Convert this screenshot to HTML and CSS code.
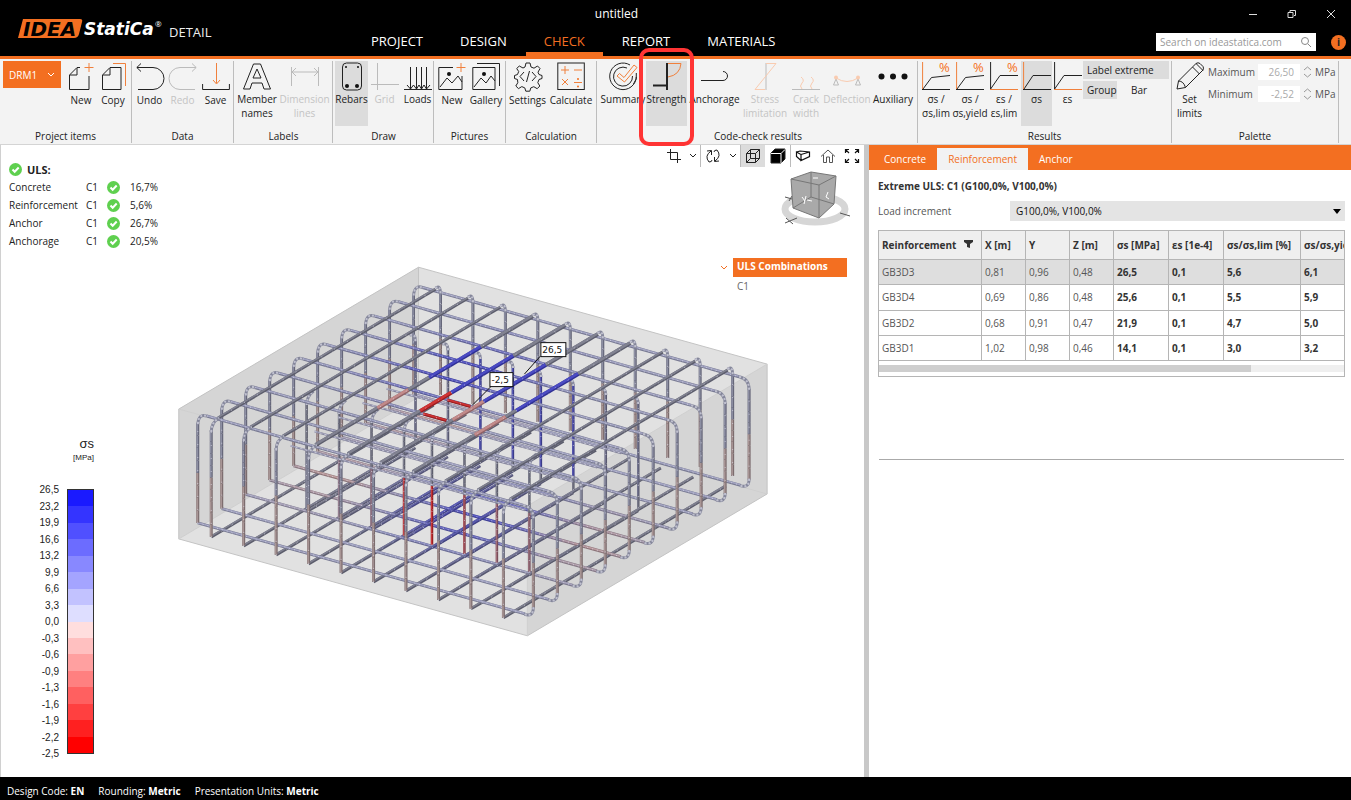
FILE: index.html
```html
<!DOCTYPE html>
<html lang="en">
<head>
<meta charset="utf-8">
<title>IDEA StatiCa Detail - untitled</title>
<link rel="stylesheet" href="styles.css">
</head>
<body>
<div class="app">
<header class="titlebar">
  <div class="brand">
    <svg class="logo" width="146" height="22" viewBox="0 0 146 22" role="img" aria-label="IDEA StatiCa">
      <path class="logo-plate" d="M6 1H63Q66 1 65 4L62 16Q61 20 57 20H1Z"/>
      <text class="logo-idea" x="6" y="18">IDEA</text>
      <text class="logo-statica" x="67" y="17">StatiCa</text>
      <text class="logo-reg" x="138" y="9">®</text>
    </svg>
    <span>DETAIL</span>
  </div>
  <div class="doc-title">untitled</div>
  <div class="window-buttons">
    <button aria-label="Minimize"><svg width="12" height="12"><path d="M2 6.500h8"/></svg></button>
    <button aria-label="Restore"><svg width="12" height="12"><path d="M2 4.500h5v5H2zM4 4V2.500h5.500v5H8"/></svg></button>
    <button aria-label="Close"><svg width="12" height="12"><path d="M2 2l8 8M10 2l-8 8"/></svg></button>
  </div>
  <nav class="tabs">
    <a href="#project">PROJECT</a><a href="#design">DESIGN</a><a href="#check" class="active">CHECK</a><a href="#report">REPORT</a><a href="#materials">MATERIALS</a>
  </nav>
  <div class="header-tools">
    <label class="search"><input type="text" placeholder="Search on ideastatica.com" aria-label="Search on ideastatica.com"><svg width="12" height="12"><circle cx="5" cy="5" r="3.500"/><path d="M8 8l3 3"/></svg></label>
    <button class="info" aria-label="Info">i</button>
  </div>
</header>

<div class="ribbon">
  <section class="group g-project">
    <div class="tools">
      <button class="item-select">DRM1 <svg width="8" height="6"><path d="M1 1l3 3 3-3"/></svg></button>
      <button class="tool low"><svg class="ico" viewBox="0 0 28 28"><path d="M22 14V27.500H2.500V13L10 5.500H13M10 6V13H3"/><path class="o" d="M22 1v9M17.500 5.500h9"/></svg>New</button>
      <button class="tool low"><svg class="ico" viewBox="0 0 28 28"><path d="M3.500 13L11 5.500H22V27.500H3.500zM11 6V13H4"/><path class="o" d="M14 1.500H26.500V24"/></svg>Copy</button>
    </div>
    <h2>Project items</h2>
  </section>
  <section class="group g-data">
    <div class="tools">
      <button class="tool low"><svg class="ico" viewBox="0 0 28 28"><path d="M5 1.500L.800 5.500 5 9.500M1 5.500H17A11 11 0 0 1 17 27.500H2"/></svg>Undo</button>
      <button class="tool low" disabled><svg class="ico" viewBox="0 0 28 28"><path d="M23 1.500L27.200 5.500 23 9.500M27 5.500H11A11 11 0 0 0 11 27.500H26"/></svg>Redo</button>
      <button class="tool low"><svg class="ico" viewBox="0 0 28 28"><path d="M.600 22V27.500H27.400V22"/><path class="o" d="M14.500 1V21M11 18l3.500 4 3.500-4"/></svg>Save</button>
    </div>
    <h2>Data</h2>
  </section>
  <section class="group g-labels">
    <div class="tools">
      <button class="tool"><svg class="ico" viewBox="0 0 28 28"><path d="M10.500 2H17.500L27.500 27H21L19 21H9L7 27H.500zM14 7L18 16H10z"/></svg>Member<br>names</button>
      <button class="tool" disabled><svg class="ico" viewBox="0 0 28 28"><path d="M.500 5V24M27.500 5V24M1 10H27M5 6L1 10l4 4M23 6l4 4-4 4"/></svg>Dimension<br>lines</button>
    </div>
    <h2>Labels</h2>
  </section>
  <section class="group g-draw">
    <div class="tools">
      <button class="tool on"><svg class="ico" viewBox="0 0 28 28"><rect x="4.500" y="1" width="19" height="27" rx="4"/><g class="fill"><circle cx="8" cy="5" r="1"/><circle cx="20" cy="5" r="1"/><circle cx="9" cy="24" r="2"/><circle cx="19" cy="24" r="2"/></g></svg>Rebars</button>
      <button class="tool" disabled><svg class="ico" viewBox="0 0 28 28"><path d="M6.500 1V28M0 22.500H28"/></svg>Grid</button>
      <button class="tool"><svg class="ico" viewBox="0 0 28 28"><path d="M0 27.500H28M6.500 5V27M12.500 5V27M17.500 5V27M22.500 5V27M3 23l3.500 4 3-4 3 4 2.500-4 2.500 4 2.500-4 2.500 4 3.500-4"/></svg>Loads</button>
    </div>
    <h2>Draw</h2>
  </section>
  <section class="group g-pictures">
    <div class="tools">
      <button class="tool low"><svg class="ico" viewBox="0 0 28 28"><path d="M15 5.500H.800V27.500H24V14M2 25l7-9 5 5 6-7 4 6"/><circle class="fill" cx="11" cy="12" r="2"/><path class="o" d="M23 1v9M18.500 5.500h9"/></svg>New</button>
      <button class="tool low"><svg class="ico" viewBox="0 0 28 28"><path d="M.800 5.500H23V27.500H.800zM5 1.500H27.500V24M2 25l7-9 5 5 5-7 4 5"/><circle class="fill" cx="12" cy="12" r="2"/></svg>Gallery</button>
    </div>
    <h2>Pictures</h2>
  </section>
  <section class="group g-calc">
    <div class="tools">
      <button class="tool low"><svg class="ico" viewBox="0 0 28 28"><path d="M12 1h4l1 4 3 1.200 3.500-2.200 2.500 2.500-2 3.700 1 2.300 3 1v3l-3 1-1.200 3.200 2 3.300-2.600 2.700-3.400-2-3 1.200-1 3.300h-4l-1-3.300-3-1.300-3.300 2-2.700-2.600 2-3.300L3.500 17.500.500 16.500v-3l3-1 1.200-3L2.700 6.500 5.300 4 9 6l2-1zM10 10l-4 4.500 4 4.500M18 10l4 4.500-4 4.500M15.500 9l-3 11"/></svg>Settings</button>
      <button class="tool low"><svg class="ico" viewBox="0 0 28 28"><rect x=".800" y="1" width="26.500" height="26.500"/><path class="o" d="M8 4v8M4 8h8M17 8h8M5 17l6 6M11 17l-6 6M17 20.500h8"/><g class="ofill"><circle cx="21" cy="17" r="1"/><circle cx="21" cy="24.500" r="1"/></g></svg>Calculate</button>
    </div>
    <h2>Calculation</h2>
  </section>
  <section class="group g-code">
    <div class="tools">
      <button class="tool"><svg class="ico" viewBox="0 0 28 28"><path d="M21 3A13.300 13.300 0 1 0 27.300 15M18 6A9.500 9.500 0 1 0 23.500 14M24.500 22A13 13 0 0 0 27.300 11"/><path class="o" d="M8 14l2.500-2.500 4.500 4L25 3l3 2.500L15.500 20z"/></svg>Summary</button>
      <button class="tool on marked"><svg class="ico" viewBox="0 0 28 28"><path class="bold" d="M14 1V28M0 23.500H14"/><path class="o" d="M15 1.500H28Q27 13 15 15"/></svg>Strength</button>
      <button class="tool"><svg class="ico" viewBox="0 0 28 28"><path d="M0 18.500H22A4.500 4.500 0 0 0 22 9.500"/></svg>Anchorage</button>
      <button class="tool" disabled><svg class="ico" viewBox="0 0 28 28"><path d="M15 1V28"/><path class="o" d="M15 1.500H25L4 27.500H14"/></svg>Stress<br>limitation</button>
      <button class="tool" disabled><svg class="ico" viewBox="0 0 28 28"><path d="M0 27.500H28"/><path class="o" d="M9 15q4 3 1 6t0 6M19 15q4 3 1 6t0 6"/></svg>Crack<br>width</button>
      <button class="tool" disabled><svg class="ico" viewBox="0 0 28 28"><path d="M3 17l2.500 6h-5zM25 17l2.500 6h-5z"/><path class="o" d="M3 16q11 7 22 0"/><g class="ofill"><circle cx="3" cy="15.500" r="2"/><circle cx="25" cy="15.500" r="2"/></g></svg>Deflection</button>
      <button class="tool"><svg class="ico" viewBox="0 0 28 28"><g class="fill"><circle cx="2.500" cy="14.500" r="3"/><circle cx="14" cy="14.500" r="3"/><circle cx="25.500" cy="14.500" r="3"/></g></svg>Auxiliary</button>
    </div>
    <h2>Code-check results</h2>
  </section>
  <section class="group g-results">
    <div class="tools">
      <button class="tool"><svg class="ico" viewBox="0 0 28 28"><path d="M0 27.500H28M1 27L9.500 15.500 28 13.500"/><path class="o" d="M.600 0V27"/><text class="pct" x="17" y="10">%</text></svg>σs /<br>σs,lim</button>
      <button class="tool"><svg class="ico" viewBox="0 0 28 28"><path d="M0 27.500H28M1 27L9.500 15.500 28 13.500"/><path class="o" d="M.600 0V27"/><text class="pct" x="17" y="10">%</text></svg>σs /<br>σs,yield</button>
      <button class="tool"><svg class="ico" viewBox="0 0 28 28"><path class="o" d="M0 27.500H28"/><path d="M.600 0V27L10 13.500H28"/><text class="pct" x="17" y="10">%</text></svg>εs /<br>εs,lim</button>
      <button class="tool on"><svg class="ico" viewBox="0 0 28 28"><path d="M0 27.500H28M1 27L10 13.500H28"/><path class="o" d="M.600 0V27"/></svg>σs</button>
      <button class="tool"><svg class="ico" viewBox="0 0 28 28"><path class="o" d="M0 27.500H28"/><path d="M.600 0V27L10 13.500H28"/></svg>εs</button>
      <div class="toggles">
        <button class="on wide">Label extreme</button>
        <button class="on">Group</button>
        <button>Bar</button>
      </div>
    </div>
    <h2>Results</h2>
  </section>
  <section class="group g-palette">
    <div class="tools">
      <button class="tool"><svg class="ico" viewBox="0 0 28 28"><path d="M1 27L2.500 19 20 1.500Q22 0 24 1.500L27 4.500Q28 6 27 8L9.500 25.500zM2.500 19q5 0 7 6.500M16.500 5l7 7M20 1.500l7 7"/></svg>Set<br>limits</button>
      <div class="limits">
        <label for="max">Maximum</label><input id="max" type="text" value="26,50" disabled><svg width="9" height="14"><path d="M1 5l3.500-3L8 5M1 9l3.500 3L8 9"/></svg><span>MPa</span>
        <label for="min">Minimum</label><input id="min" type="text" value="-2,52" disabled><svg width="9" height="14"><path d="M1 5l3.500-3L8 5M1 9l3.500 3L8 9"/></svg><span>MPa</span>
      </div>
    </div>
    <h2>Palette</h2>
  </section>
</div>

<main class="workspace">
  <section class="viewport">
    <svg class="scene" id="scene" viewBox="0 145 864 632" role="img" aria-label="Reinforcement stress model">
      <path class="face" d="M178 409L418 267 767 364V494L527 636 178 539z"/>
      <path class="face-side" d="M178 409L418 267V397L178 539zM527 506L767 364V494L527 636z"/>
      <path class="edge" d="M178 409L418 267 767 364V494L527 636 178 539zM418 267V397"/>
      <path class="edge faint" d="M178 539L418 397 767 494M178 409L527 506 767 364M527 506V636"/>
      <g id="bars"></g>
      <path class="leader" d="M540 356L524 374M490 387L472 405"/>
      <rect class="tag" x="540.500" y="342.500" width="25" height="14"/><text class="tag-text" x="542" y="353">26,5</text>
      <rect class="tag" x="489.500" y="372.500" width="23" height="14"/><text class="tag-text" x="491" y="383">-2,5</text>
    </svg>
    <div class="overlay">
      <div class="left-col">
        <div class="uls-head"><svg class="tick" viewBox="0 0 13 13"><circle cx="6.500" cy="6.500" r="6.500"/><path d="M3.500 6.500l2.200 2.300 4-4.300"/></svg>ULS:</div>
        <dl class="uls">
          <dt>Concrete</dt><dd>C1</dd><dd><svg class="tick" viewBox="0 0 13 13"><circle cx="6.500" cy="6.500" r="6.500"/><path d="M3.500 6.500l2.200 2.300 4-4.300"/></svg></dd><dd>16,7%</dd>
          <dt>Reinforcement</dt><dd>C1</dd><dd><svg class="tick" viewBox="0 0 13 13"><circle cx="6.500" cy="6.500" r="6.500"/><path d="M3.500 6.500l2.200 2.300 4-4.300"/></svg></dd><dd>5,6%</dd>
          <dt>Anchor</dt><dd>C1</dd><dd><svg class="tick" viewBox="0 0 13 13"><circle cx="6.500" cy="6.500" r="6.500"/><path d="M3.500 6.500l2.200 2.300 4-4.300"/></svg></dd><dd>26,7%</dd>
          <dt>Anchorage</dt><dd>C1</dd><dd><svg class="tick" viewBox="0 0 13 13"><circle cx="6.500" cy="6.500" r="6.500"/><path d="M3.500 6.500l2.200 2.300 4-4.300"/></svg></dd><dd>20,5%</dd>
        </dl>
        <div class="legend">
          <div class="legend-title">σs</div>
          <div class="legend-unit">[MPa]</div>
          <div class="scale">
            <div class="scale-labels"><span>26,5</span><span>23,2</span><span>19,9</span><span>16,6</span><span>13,2</span><span>9,9</span><span>6,6</span><span>3,3</span><span>0,0</span><span>-0,3</span><span>-0,6</span><span>-0,9</span><span>-1,3</span><span>-1,6</span><span>-1,9</span><span>-2,2</span><span>-2,5</span></div>
            <div class="scale-bar"><i></i><i></i><i></i><i></i><i></i><i></i><i></i><i></i><i></i><i></i><i></i><i></i><i></i><i></i><i></i><i></i></div>
          </div>
        </div>
      </div>
      <div class="right-col">
        <div class="view-tools">
          <button aria-label="Crop"><svg width="16" height="16"><path d="M4.500 1v10.500H15M1 4.500H11.500V15"/></svg></button>
          <button class="chev" aria-label="Crop options"><svg width="8" height="6"><path d="M1 1l3 3 3-3"/></svg></button>
          <button class="sep" aria-label="Rotate"><svg width="16" height="16"><path d="M4 14Q-1 8 6 3M2 3l4.500-.500L6.500 7M12 2Q17 8 10 13M14 13l-4.500.500L9.500 9M9 4q0-2 3-2M7 12q0 2-3 2"/></svg></button>
          <button class="chev" aria-label="Rotate options"><svg width="8" height="6"><path d="M1 1l3 3 3-3"/></svg></button>
          <button class="sep on" aria-label="Wireframe"><svg width="16" height="16"><path d="M1.500 5.500h9v9h-9zM5.500 1.500h9v9h-9zM1.500 5.500l4-4M10.500 5.500l4-4M10.500 14.500l4-4M1.500 14.500l4-4"/></svg></button>
          <button aria-label="Solid"><svg width="16" height="16"><path class="solid" d="M1 5l4-4h10v10l-4 4H1z"/><path class="cut" d="M1 5.500h10V15M11 5.500L15 1.500"/></svg></button>
          <button class="sep" aria-label="Perspective"><svg width="16" height="16"><path class="mid" d="M1.500 4L5 3l9.500 1v4.500L6 12.500V6.500L1.500 4V8.500L6 12.500M6 6.500l8.500-2.500"/></svg></button>
          <button aria-label="Home view"><svg width="16" height="16"><path class="thin" d="M1 8.500L8 2l7 6.500M3.500 7v7.500H6.500V9h3v5.500h3V7"/></svg></button>
          <button aria-label="Fit view"><svg width="16" height="16"><path class="mid" d="M1.500 5V1.500h3.500M1.500 1.500l3.500 3.500M11 1.500h3.500V5M14.500 1.500l-3.500 3.500M1.500 11v3.500H5M1.500 14.500l3.500-3.500M14.500 11v3.500H11M14.500 14.500l-3.500-3.500"/></svg></button>
        </div>
        <svg class="cube" viewBox="0 0 72 62">
          <ellipse class="ring" cx="36" cy="40" rx="30" ry="13"/>
          <path class="axis" d="M6 28l7 2M13 27l-3 5M6 54l12-5M7 49l7 6M61 44l10 3"/>
          <path class="cube-face" d="M12 10L32 3 57 7 55 35 40 49 14 39z"/>
          <path class="cube-edge" d="M12 10L32 3 57 7 55 35 40 49 14 39zM12 10l28 6 17-9M40 16V49M32 3v25L14 39M32 28l23 7"/>
          <path class="cube-mark" d="M23 28l3 4M27 27l-2 8M28 31l5 1M34 9h5M49 23l-2 5 3 2"/>
        </svg>
        <details class="combos" open>
          <summary><svg width="8" height="6"><path d="M1 1l3 3 3-3"/></svg><b>ULS Combinations</b></summary>
          <a href="#c1">C1</a>
        </details>
      </div>
    </div>
  </section>

  <aside class="panel">
    <nav class="panel-tabs"><a href="#concrete">Concrete</a><a href="#reinforcement" class="active">Reinforcement</a><a href="#anchor">Anchor</a></nav>
    <div class="panel-body">
      <h1>Extreme ULS: C1 (G100,0%, V100,0%)</h1>
      <div class="field"><label for="inc">Load increment</label><div class="pick"><select id="inc"><option>G100,0%, V100,0%</option></select></div></div>
      <div class="table-wrap">
        <div class="table-clip">
        <table>
          <colgroup><col class="c-name"><col class="c-x"><col class="c-y"><col class="c-y"><col class="c-s"><col class="c-s"><col class="c-lim"><col class="c-lim"></colgroup>
          <thead><tr><th>Reinforcement <svg width="9" height="9"><path d="M0 0h9v2L6 4v4L3 7V4L0 2z"/></svg></th><th>X [m]</th><th>Y</th><th>Z [m]</th><th>σs [MPa]</th><th>εs [1e-4]</th><th>σs/σs,lim [%]</th><th>σs/σs,yield [%]</th></tr></thead>
          <tbody>
            <tr class="selected"><td>GB3D3</td><td>0,81</td><td>0,96</td><td>0,48</td><td>26,5</td><td>0,1</td><td>5,6</td><td>6,1</td></tr>
            <tr><td>GB3D4</td><td>0,69</td><td>0,86</td><td>0,48</td><td>25,6</td><td>0,1</td><td>5,5</td><td>5,9</td></tr>
            <tr><td>GB3D2</td><td>0,68</td><td>0,91</td><td>0,47</td><td>21,9</td><td>0,1</td><td>4,7</td><td>5,0</td></tr>
            <tr><td>GB3D1</td><td>1,02</td><td>0,98</td><td>0,46</td><td>14,1</td><td>0,1</td><td>3,0</td><td>3,2</td></tr>
          </tbody>
        </table>
        </div>
        <div class="scroll"><div class="thumb"></div></div>
      </div>
      <hr>
    </div>
  </aside>
</main>

<footer class="status"><span>Design Code: <b>EN</b></span><span>Rounding: <b>Metric</b></span><span>Presentation Units: <b>Metric</b></span></footer>
</div>
<script src="scene.js"></script>
</body>
</html>
```

FILE: styles.css
```css
* { box-sizing: border-box; }
body { margin: 0; font-family: "Open Sans", "Noto Sans", sans-serif; font-size: 11px; color: #222; background: #fff; }
button { font: inherit; color: inherit; background: none; border: 0; padding: 0; margin: 0; }
a { color: inherit; text-decoration: none; }
h1, h2 { margin: 0; font-size: inherit; }
svg { display: block; fill: none; stroke: #222; flex: none; }
svg text { stroke: none; }
.app { display: flex; flex-direction: column; min-height: 100vh; }

.titlebar { display: grid; grid-template-columns: 353px auto 1fr 118px; grid-template-rows: 28px 28px; background: #000; color: #fff; border-bottom: 3px solid #f36f21; }
.brand { grid-area: 1 / 1 / 3 / 2; display: flex; align-items: center; gap: 6px; padding: 2px 0 0 17px; font-size: 13px; color: #eee; }
.brand span { padding-top: 6px; }
.logo-plate { fill: #f36f21; stroke: none; }
.logo-idea { font: italic bold 20px "DejaVu Sans", sans-serif; fill: #000; }
.logo-statica { font: italic bold 17px "DejaVu Sans", sans-serif; fill: #fff; }
.logo-reg { font: 8px "Open Sans", sans-serif; fill: #fff; }
.doc-title { grid-area: 1 / 1 / 2 / 4; text-align: center; font-size: 12px; line-height: 28px; }
.window-buttons { grid-area: 1 / 4 / 2 / 5; display: grid; grid-template-columns: repeat(3, 1fr); }
.window-buttons button { display: grid; place-items: center; }
.window-buttons svg { stroke: #ddd; }
.tabs { grid-area: 2 / 2 / 3 / 3; display: flex; gap: 1px; font-size: 13px; line-height: 25px; }
.tabs a { padding: 1px 18px 0; border-bottom: 4px solid transparent; height: 28px; }
.tabs .active { color: #f36f21; border-color: #f36f21; }
.header-tools { grid-area: 2 / 3 / 3 / 5; display: flex; justify-content: flex-end; align-items: center; gap: 15px; padding-right: 5px; }
.search { display: flex; align-items: center; width: 160px; height: 18px; padding: 0 4px; background: #fff; }
.search input { flex: 1; min-width: 0; border: 0; padding: 0; font: inherit; font-size: 10px; background: none; }
.search input::placeholder { color: #999; }
.search svg { stroke: #888; }
.info { width: 15px; height: 15px; border-radius: 50%; background: #f36f21; color: #222; font-size: 10px; font-weight: bold; line-height: 15px; }

.ribbon { display: flex; background: #f3f3f3; padding: 2px 0 1px; height: 86px; border-bottom: 1px solid #d4d4d4; }
.group { display: flex; flex-direction: column; justify-content: space-between; border-right: 1px solid #bdbdbd; flex: none; }
.tools { display: flex; height: 65px; padding-left: 1px; }
.group h2 { font-size: 10px; font-weight: normal; text-align: center; line-height: 14px; }
.tool { display: flex; flex-direction: column; align-items: center; font-size: 10px; line-height: 14px; white-space: nowrap; flex: none; min-width: 0; text-align: center; padding-top: 1px; }
.tool.low .ico { margin-bottom: 3px; }
.ico { width: 28px; height: 28px; margin-bottom: 2px; overflow: visible; }
.tool:disabled { color: #c4c4c4; }
.tool:disabled .ico { stroke: #bbb; }
.tool:disabled .o { stroke: #f9cbb0; }
.tool:disabled .ofill { fill: #f9cbb0; }
.o { stroke: #f0803c; }
.fill { fill: #111; stroke: none; }
.ofill { fill: #f36f21; stroke: none; }
.bold { stroke-width: 2; }
.mid { stroke: #111; stroke-width: 1.2; }
.thin { stroke: #555; }
.pct { font: 13px "Open Sans", sans-serif; fill: #f36f21; }
.on { background: #dcdcdc; }
.g-project { width: 132px; }
.g-project .tools { padding-left: 3px; }
.g-project .tool { width: 32px; }
.item-select { display: flex; align-items: center; justify-content: space-between; width: 58px; height: 27px; margin-right: 4px; padding: 0 6px; background: #f36f21; color: #fff; font-size: 10px; }
.item-select svg { stroke: #fff; }
.g-data { width: 102px; }
.g-data .tool { width: 33px; }
.g-labels { width: 99px; padding-left: 1px; }
.g-labels .tool { width: 42px; }
.g-labels .tool + .tool { width: 53px; }
.g-draw { width: 101px; padding-left: 1px; }
.g-draw .tool { width: 33px; }
.g-pictures { width: 72px; }
.g-pictures .tool { width: 34px; }
.g-calc { width: 91px; }
.g-calc .tool { width: 41px; }
.g-calc .tool + .tool { width: 46px; }
.g-code { width: 321px; padding-left: 2px; }
.g-code .tool { width: 46px; }
.g-code .marked { width: 41px; position: relative; }
.marked::after { content: ""; position: absolute; inset: -13px -7px -20px; border: 4px solid #ff3434; border-radius: 10px; z-index: 2; }
.g-code .tool:nth-child(3) { width: 55px; }
.g-code .tool:nth-child(5) { width: 36px; }
.g-results { width: 254px; }
.g-results .tool { width: 34px; }
.g-results .tool:nth-child(4), .g-results .tool:nth-child(5) { width: 31px; }
.toggles { display: grid; grid-template-columns: 34px 1fr; grid-template-rows: 18px 18px; gap: 2px 10px; flex: 1; padding-right: 2px; font-size: 10px; }
.toggles button { text-align: left; padding-left: 4px; white-space: nowrap; }
.toggles .wide { grid-column: 1 / 3; }
.g-palette { width: 167px; }
.g-palette .tool { width: 33px; }
.limits { display: grid; grid-template-columns: auto 42px 9px auto; grid-template-rows: 16px 16px; gap: 6px 3px; align-content: start; align-items: center; padding: 3px 0 0 2px; font-size: 10px; color: #555; }
.limits input { width: 100%; height: 16px; border: 0; padding: 0 6px 0 0; text-align: right; font: inherit; color: #aaa; background: #fff; }
.limits svg { stroke: #999; }

.workspace { flex: 1; display: grid; grid-template-columns: 869fr 482fr; min-height: 0; }
.viewport { display: grid; border-right: 5px solid #c8c8c8; border-left: 1px solid #d0d0d0; min-width: 0; }
.scene, .overlay { grid-area: 1 / 1; }
.scene { width: 100%; height: 100%; }
.face { fill: #e1e1e1; stroke: none; }
.face-side { fill: #d5d5d5; stroke: none; }
.edge { stroke: #c4c4c4; }
.faint { stroke: #cfcfcf; }
.leader { stroke: #111; }
.tag { fill: #fff; stroke: #111; }
.tag-text { font: 9px "DejaVu Sans", sans-serif; fill: #111; }
.overlay { display: flex; justify-content: space-between; }
.left-col { padding: 15px 0 0 8px; display: flex; flex-direction: column; }
.tick { width: 13px; height: 13px; fill: #5fd04f; stroke: none; }
.tick path { fill: none; stroke: #fff; stroke-width: 2; }
.uls-head { display: flex; align-items: center; gap: 5px; height: 18px; font-weight: bold; font-size: 11px; }
.uls { display: grid; grid-template-columns: 77px 21px 23px auto; grid-auto-rows: 18px; align-items: center; margin: 0; font-size: 10px; }
.uls dd { margin: 0; }
.legend { margin: 186px 0 0 14px; width: 71px; font-family: "Liberation Sans", Arial, sans-serif; text-align: right; }
.legend-title { font-size: 13px; line-height: 15px; }
.legend-unit { font-size: 8px; line-height: 14px; }
.scale { display: flex; justify-content: flex-end; gap: 8px; margin-top: 19px; }
.scale-labels { display: flex; flex-direction: column; justify-content: space-between; height: 276px; font-size: 10px; line-height: 12px; }
.scale-bar { display: grid; grid-auto-rows: 1fr; width: 27px; height: 265px; margin-top: 5px; border: 1px solid #333; }
.scale-bar i:nth-child(1) { background: #1a1aff; }
.scale-bar i:nth-child(2) { background: #3434ff; }
.scale-bar i:nth-child(3) { background: #5050ff; }
.scale-bar i:nth-child(4) { background: #6c6cff; }
.scale-bar i:nth-child(5) { background: #8888ff; }
.scale-bar i:nth-child(6) { background: #a4a4ff; }
.scale-bar i:nth-child(7) { background: #c2c2ff; }
.scale-bar i:nth-child(8) { background: #dedeff; }
.scale-bar i:nth-child(9) { background: #ffdede; }
.scale-bar i:nth-child(10) { background: #ffc0c0; }
.scale-bar i:nth-child(11) { background: #ffa0a0; }
.scale-bar i:nth-child(12) { background: #ff8080; }
.scale-bar i:nth-child(13) { background: #ff6060; }
.scale-bar i:nth-child(14) { background: #ff4040; }
.scale-bar i:nth-child(15) { background: #ff2020; }
.scale-bar i:nth-child(16) { background: #f00; }

.right-col { display: flex; flex-direction: column; align-items: flex-end; }
.view-tools { display: flex; align-items: center; height: 22px; padding-right: 1px; gap: 1px; }
.view-tools button { display: grid; place-items: center; width: 23px; height: 22px; }
.view-tools .chev { width: 13px; }
.view-tools .sep { border-left: 1px solid #bbb; width: 25px; }
.solid { fill: #000; }
.cut { stroke: #fff; }
.cube { width: 72px; height: 62px; margin: 2px 13px 0 0; }
.ring { stroke: #d6d6d6; stroke-width: 7; }
.axis { stroke: #555; }
.cube-face { fill: #a9a9a9; stroke: none; }
.cube-edge { stroke: #777; }
.cube-mark { stroke: #fff; }
.combos { margin: 27px 17px 0 0; width: 127px; font-size: 11px; color: #666; }
.combos summary { display: flex; align-items: center; gap: 5px; list-style: none; }
.combos summary svg { stroke: #f36f21; }
.combos b { flex: 1; height: 19px; line-height: 17px; padding-left: 4px; background: #f36f21; color: #fff; font-size: 10px; white-space: nowrap; }
.combos a { display: block; padding: 2px 0 0 17px; font-size: 10px; }

.panel { min-width: 0; }
.panel-tabs { display: flex; height: 25px; background: #f36f21; color: #fff; padding: 3px 0 0 4px; font-size: 10px; line-height: 22px; }
.panel-tabs a { padding: 0 11px; }
.panel-tabs .active { background: #f2f2f2; color: #f36f21; }
.panel-body { padding: 7px 6px 0 9px; }
.panel h1 { font-size: 10px; line-height: 18px; color: #333; }
.field { display: grid; grid-template-columns: 132px 1fr; align-items: center; margin-top: 6px; font-size: 10px; color: #555; }
.pick { position: relative; }
.pick::after { content: ""; position: absolute; right: 4px; top: 8px; border: 4px solid transparent; border-top: 5px solid #000; border-bottom: 0; }
.field select { appearance: none; width: 100%; height: 20px; border: 0; border-radius: 0; padding: 0 6px; background: #e4e4e4; color: #111; font: inherit; }
.table-wrap { margin-top: 9px; border: 1px solid #b5b5b5; border-top: 0; height: 147px; }
.table-clip { overflow: hidden; }
table { border-collapse: collapse; table-layout: fixed; width: 499px; height: 131px; margin-left: -1px; font-size: 10px; }
.c-name { width: 103px; } .c-x { width: 44px; } .c-y { width: 44px; } .c-s { width: 55px; } .c-lim { width: 77px; }
th, td { border: 1px solid #b5b5b5; padding: 0 3px; text-align: left; white-space: nowrap; overflow: hidden; }
th { height: 29px; background: #efefef; color: #333; }
th svg { display: inline; fill: #333; stroke: none; margin-left: 5px; }
td { color: #555; }
td:nth-child(n+5) { font-weight: bold; color: #333; }
.selected td { background: #dedede; }
.scroll { margin-top: 4px; height: 7px; background: #efefef; }
.thumb { width: 80%; height: 7px; background: #cecece; }
hr { border: 0; border-top: 1px solid #aaa; margin: 82px 1px 0; }

.status { display: flex; gap: 14px; height: 23px; align-items: center; padding: 4px 7px 0; background: #000; color: #fff; font-size: 10px; }
```

FILE: scene.js
```js
// Draws the reinforcement cage: stirrups running along both plan axes
// plus the inner stirrup row, coloured by steel stress.
const NS = "http://www.w3.org/2000/svg";
const bars = document.getElementById("bars");

const mix = (a, b, k) => a.map((v, n) => Math.round(v + (b[n] - v) * k));
const rgb = c => `rgb(${c.join(",")})`;
const bump = (x, y, cx, cy, rx, ry) => {
  const dx = (x - cx) / rx, dy = (y - cy) / ry;
  return Math.exp(-dx * dx - dy * dy);
};
const STEEL = [112, 113, 130], LIGHT = [150, 152, 184], POST = [126, 128, 150], BLUE = [48, 48, 190],
      PINK = [182, 146, 146], RED = [200, 24, 24], WARM = [156, 134, 134];

function add(d, color, width, dash, opacity) {
  const p = document.createElementNS(NS, "path");
  p.setAttribute("d", d);
  p.setAttribute("stroke", color);
  p.setAttribute("stroke-width", width);
  if (dash) p.setAttribute("stroke-dasharray", dash);
  if (opacity) p.setAttribute("opacity", opacity);
  bars.appendChild(p);
}

// Each bar is a shaded core with a darker underside and sparse highlights.
function bar(x1, y1, x2, y2, colour, width, shine) {
  const n = Math.max(1, Math.round(Math.hypot(x2 - x1, y2 - y1) / 12));
  const at = k => [x1 + (x2 - x1) * k, y1 + (y2 - y1) * k];
  for (let s = 0; s < n; s++) {
    const [ax, ay] = at(s / n), [bx, by] = at((s + 1) / n);
    const c = colour((ax + bx) / 2, (ay + by) / 2, (s + .5) / n);
    add(`M${ax} ${ay}L${bx} ${by}`, rgb(mix(c, [40, 40, 50], .28)), width);
    add(`M${ax - .5} ${ay - .5}L${bx - .5} ${by - .5}`, rgb(mix(c, [255, 255, 255], .12)), width - 1.4);
  }
  add(`M${x1} ${y1}L${x2} ${y2}`, "#e6e6f4", 1, shine, .6);
}

function corner(x1, y1, cx, cy, x2, y2) {
  const d = `M${x1} ${y1}Q${cx} ${cy} ${x2} ${y2}`;
  add(d, "#85879b", 3);
  add(d, "#d8d8e6", 2, "2 2", .7);
}

const along = (i, s, z) => [197 + 24 * i + 336 * s, 523 - 14.3 * i + 93.4 * s - 108 * z];
const across = (j, t, z) => [210.5 + 32.5 * j + 229.5 * t, 537 + 9 * j - 136 * t - 115 * z];

const upright = (x, y, k) => k < .55 ? WARM : POST;
const lowAcross = (x, y) => mix(STEEL, BLUE, .7 * bump(x, y, 455, 515, 70, 45));
const lowAlong = (x, y) => mix(
  mix(LIGHT, PINK, Math.max(bump(x, y, 330, 475, 60, 30), bump(x, y, 430, 425, 70, 20), bump(x, y, 590, 545, 50, 30))),
  BLUE, .8 * bump(x, y, 475, 520, 70, 28));
const topAlong = (x, y) => mix(LIGHT, BLUE, .85 * bump(x, y, 460, 372, 80, 32));

const hot = { 3: [378, 412, 427, 482], 4: [423, 446, 456, 516], 5: [450, 482, 486, 550], 6: [470, 502, 518, 576] };
const topAcross = j => x => {
  const h = hot[j];
  if (!h) return STEEL;
  if (x > h[0] && x < h[1]) return j === 4 ? RED : mix(PINK, RED, .2);
  if (x > h[2] && x < h[3]) return mix(STEEL, BLUE, .95);
  return STEEL;
};

// bottom mat
for (let j = 9; j >= 0; j--) bar(...across(j, 0, 0), ...across(j, .97, 0), lowAcross, 3, "1 11");
for (let i = 9; i >= 0; i--) bar(...along(i, 0, 0), ...along(i, .975, 0), lowAlong, 3, "1 4");

// far uprights
for (let j = 0; j < 10; j++) {
  const [x, y] = across(j, 1, 0);
  bar(x, y - 6, x, y - 108, upright, 3, "1 12");
}
for (let i = 9; i >= 0; i--) {
  const [x, y] = along(i, 0, 0);
  bar(x, y, x, y - 100, upright, 3, "1 12");
}

// inner stirrups
for (let k = 0; k < 8; k++) {
  const shift = k > 3 ? -4.5 : 0, fx = 306 + 32.5 * k + shift, fy = 509 + 9 * k;
  const bx = fx + 109, by = fy - 64;
  const blue = k > 1 && k < 6 ? .7 : .1;
  bar(bx, by, bx, by - 106, (x, y, s) => s > .1 ? mix(STEEL, BLUE, blue) : STEEL, 2.5, "1 10");
  corner(bx, by - 104, bx, by - 112, bx - 6, by - 110);
  const redness = [0, .15, .2, .8, .95, .55, .35, .3][k];
  bar(fx, fy, fx, fy - 106, (x, y, s) => s < .55 ? mix(POST, RED, redness) : STEEL, 2.5, "1 10");
  corner(fx, fy - 104, fx, fy - 113, fx + 7, fy - 118);
  bar(fx, fy + 3, bx, by + 3, lowAcross, 2.5, "1 10");
}

// top mat
for (let i = 9; i >= 0; i--) {
  const [x, y] = along(i, 0, 1), [rx, ry] = along(i, 1, 1);
  bar(x + 9, y + 1, rx - 10, ry - 3, topAlong, 3, "1 4");
  corner(x, y + 9, x + 1, y - 2, x + 9, y + 1);
  if (i < 5) {
    const sx = 290 + 24 * i;
    const sy = y + 5 + .278 * (sx - x);
    bar(sx, sy, rx - 8, ry + 2, () => mix(LIGHT, [190, 190, 215], .4), 2, "2 3");
  }
}
bar(423, 414, 446, 420.5, () => RED, 3, "1 12");
bar(447, 400, 470, 406.5, () => RED, 3, "1 12");
for (let j = 0; j < 10; j++) {
  const [fx, fy] = across(j, 0, 1), [bx, by] = across(j, 1, 1);
  bar(fx + 7, fy - 4, bx - 5, by + 3, topAcross(j), hot[j] ? 4 : 3, "1 14");
  corner(bx - 5, by + 2, bx, by - 2, bx, by + 8);
}

// near uprights
for (let i = 9; i >= 0; i--) {
  const [x, y] = along(i, 1, 0);
  bar(x, y - 8, x, y - 99, upright, 3, "1 12");
  corner(x - 10, y - 111, x, y - 109, x, y - 98);
  corner(x, y - 9, x, y + 1, x - 9, y - 2);
}
for (let j = 0; j < 10; j++) {
  const [x, y] = across(j, 0, 0);
  bar(x, y, x, y - 107, upright, 3, "1 12");
  corner(x, y - 105, x, y - 115, x + 8, y - 119);
}
```
